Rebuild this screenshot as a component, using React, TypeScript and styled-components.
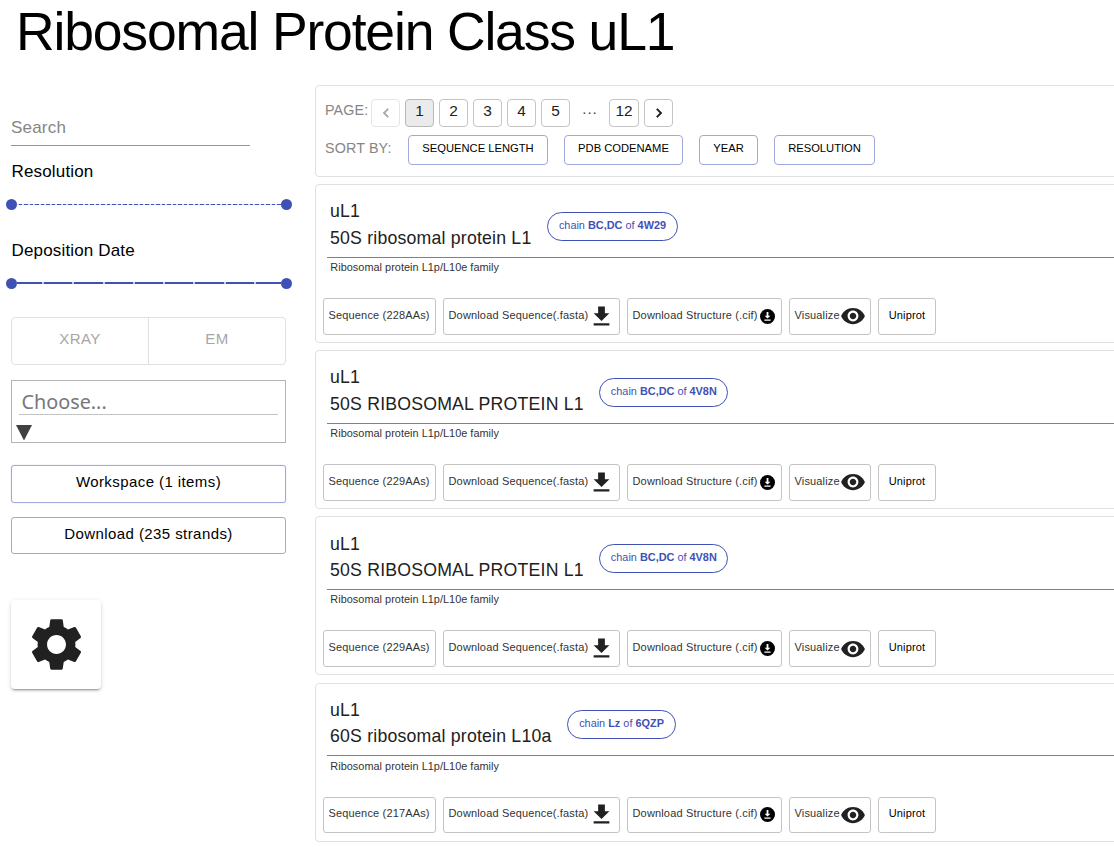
import React from "react";
import styled, { createGlobalStyle, css } from "styled-components";

const GlobalStyle = createGlobalStyle`
  *, *::before, *::after { box-sizing: border-box; }
  html, body { margin: 0; background: #fff; overflow: hidden; }
  body { font-family: "Liberation Sans", Arial, Helvetica, sans-serif; color: #000; height: 847px; }
  button { font: inherit; color: inherit; background: none; margin: 0; padding: 0; }
  svg { display: block; flex: none; }
`;

const Page = styled.div`
  width: 1114px;
  height: 847px;
  overflow: hidden;
`;

const Title = styled.h1`
  margin: 0;
  height: 85px;
  padding: 0 0 0 16px;
  font-size: 53.5px;
  line-height: 63px;
  font-weight: 400;
  letter-spacing: -1.17px;
  white-space: nowrap;
`;

const Columns = styled.div`
  display: flex;
  align-items: flex-start;
`;

const Sidebar = styled.aside`
  flex: none;
  width: 315px;
  padding: 31px 29px 0 11px;
  display: flex;
  flex-direction: column;
`;

const SearchField = styled.div`
  width: 239px;
  height: 30px;
  border-bottom: 1px solid #949494;
  font-size: 17px;
  line-height: 23px;
  letter-spacing: 0.2px;
  color: #868686;
`;

const FilterLabel = styled.div<{ $top: number }>`
  margin-top: ${(p) => p.$top}px;
  padding-left: 0.5px;
  height: 20px;
  font-size: 17px;
  line-height: 20px;
  letter-spacing: 0.16px;
`;

const Slider = styled.div<{ $top: number }>`
  margin-top: ${(p) => p.$top}px;
  height: 12px;
  margin-left: -5px;
  width: 286px;
  display: flex;
  align-items: center;
`;

const Knob = styled.span`
  flex: none;
  width: 11px;
  height: 11px;
  border-radius: 50%;
  background: #3f51b5;
`;

const DashedTrack = styled.span`
  flex: 1;
  height: 1px;
  background: repeating-linear-gradient(90deg, #d5d9f0 0 1.8px, #3f51b5 1.8px 5.5px);
`;

const YearTrack = styled.span`
  flex: 1;
  height: 2px;
  display: flex;
  gap: 2px;
  background: #c5cae9;
`;

const YearSegment = styled.i<{ $edge?: boolean }>`
  flex: ${(p) => (p.$edge ? "0 0 25px" : "1")};
  background: #3f51b5;
`;

const MethodGroup = styled.div`
  margin-top: 28px;
  height: 48px;
  display: flex;
  border: 1px solid #e0e0e0;
  border-radius: 4px;
`;

const MethodButton = styled.button`
  flex: 1;
  border: 0;
  padding-bottom: 5px;
  font-size: 15px;
  letter-spacing: 0.45px;
  color: #a6a6a6;
  & + & { border-left: 1px solid #e0e0e0; }
`;

const Chooser = styled.div`
  margin-top: 15px;
  height: 63px;
  border: 1px solid #b3b3b3;
  padding: 6px 7px 0;
`;

const ChooserInput = styled.div`
  height: 28px;
  padding-left: 2.5px;
  border-bottom: 1px solid #c4c4c4;
  font-family: "Noto Sans", sans-serif;
  font-size: 19.8px;
  line-height: 29px;
  color: #777;
`;

const Caret = styled.svg`
  margin: 10px 0 0 -3px;
`;

const SideButton = styled.button<{ $top: number; $height: number; $raised?: boolean }>`
  margin-top: ${(p) => p.$top}px;
  height: ${(p) => p.$height}px;
  border: 1px solid #9fa8da;
  border-radius: 3px;
  padding-bottom: 4px;
  font-size: 15px;
  letter-spacing: 0.42px;
  ${(p) => p.$raised && css`padding-bottom: 5px; box-shadow: 0 0 1px #9fa8da;`}
`;

const SettingsCard = styled.button`
  margin-top: 46px;
  width: 90px;
  height: 89px;
  border: 0;
  border-radius: 4px;
  display: grid;
  place-items: center;
  box-shadow: 0 3px 1px -2px rgba(0, 0, 0, 0.2), 0 2px 2px 0 rgba(0, 0, 0, 0.14), 0 1px 5px 0 rgba(0, 0, 0, 0.12);
`;

const Results = styled.main`
  flex: none;
  width: 830px;
  display: flex;
  flex-direction: column;
  gap: 7.25px;
`;

const Panel = styled.section`
  flex: none;
  border: 1px solid #e0e0e0;
  border-radius: 4px;
`;

const Controls = styled(Panel)`
  height: 92px;
  margin-bottom: -0.3px;
  padding: 13px 0 0 9px;
`;

const ControlRow = styled.div`
  display: flex;
  align-items: flex-start;
  height: 36px;
`;

const ControlLabel = styled.span<{ $width: number; $spacing: number }>`
  width: ${(p) => p.$width}px;
  flex: none;
  font-size: 14.3px;
  line-height: ${(p) => (p.$width > 50 ? 27 : 23)}px;
  letter-spacing: ${(p) => p.$spacing}px;
  color: #868686;
  white-space: nowrap;
`;

const PageButton = styled.button<{ $selected?: boolean; $disabled?: boolean; $wide?: boolean }>`
  width: ${(p) => (p.$wide ? 30 : 29)}px;
  height: 28px;
  margin-right: 5px;
  border: 1px solid #c4c4c4;
  border-radius: 4px;
  display: flex;
  justify-content: center;
  font-size: 15.4px;
  line-height: 22px;
  color: #212121;
  ${(p) => p.$selected && css`background: #ebebeb; border-color: #b8b8b8;`}
  ${(p) => p.$disabled && css`color: #aaa; border-color: #e6e6e6;`}
  svg { margin-top: 4px; }
`;

const Ellipsis = styled.span`
  width: 34px;
  padding-right: 4px;
  flex: none;
  text-align: center;
  font-size: 15px;
  line-height: 20px;
  letter-spacing: 1px;
  color: #444;
`;

const SortButton = styled.button<{ $width: number }>`
  width: ${(p) => p.$width}px;
  height: 30px;
  margin-right: 16px;
  border: 1px solid #9fa8da;
  border-radius: 4px;
  padding-bottom: 4px;
  font-size: 11.2px;
  letter-spacing: 0;
  white-space: nowrap;
`;

const Card = styled(Panel)`
  height: 159px;
  padding: 12.7px 0 0 7px;
  display: flex;
  flex-direction: column;
`;

const CardHeader = styled.div`
  flex: none;
  height: 60px;
  margin-left: 4px;
  padding-left: 3px;
  border-bottom: 1px solid #808080;
  display: flex;
`;

const Names = styled.div`
  padding-top: 0.4px;
  font-size: 17.7px;
  line-height: 26.6px;
  letter-spacing: 0.2px;
  color: #212121;
  white-space: nowrap;
`;

const Chip = styled.span<{ $width: number }>`
  width: ${(p) => p.$width}px;
  height: 29px;
  margin: 14px 0 0 15.5px;
  border: 1px solid #3f51b5;
  border-radius: 15px;
  font-size: 10.9px;
  line-height: 25px;
  text-align: center;
  color: #3f51b5;
  white-space: nowrap;
`;

const Family = styled.div`
  flex: none;
  padding: 0.3px 0 0 7.3px;
  height: 40.2px;
  font-size: 10.9px;
  line-height: 19.4px;
  letter-spacing: 0.03px;
  color: #333;
`;

const Actions = styled.div`
  display: flex;
  gap: 7px;
`;

const ActionButton = styled.button<{ $width: number; $dark?: boolean; $inset?: number }>`
  width: ${(p) => p.$width}px;
  height: 36.8px;
  padding: 0 ${(p) => p.$inset ?? 4.5}px 0 4.5px;
  border: 1px solid #c4c4c4;
  border-radius: 3px;
  display: flex;
  align-items: center;
  justify-content: ${(p) => (p.$dark ? "center" : "space-between")};
  font-size: 11px;
  letter-spacing: 0.16px;
  color: ${(p) => (p.$dark ? "#000" : "#333")};
  white-space: nowrap;
  span { padding-bottom: 3px; }
`;

const DownloadIcon = () => (
  <svg width="27" height="27" viewBox="0 0 24 24" fill="#212121">
    <path d="M19 9h-4V3H9v6H5l7 7 7-7zM5 18v2h14v-2H5z" />
  </svg>
);

const CircleDownloadIcon = () => (
  <svg width="15" height="15" viewBox="0 0 15 15">
    <circle cx="7.5" cy="7.5" r="7.5" fill="#000" />
    <path d="M6.6 3h1.8v3.7h2L7.5 9.6 4.6 6.7h2zM4.4 10.6h6.2v1.2H4.4z" fill="#fff" />
  </svg>
);

const EyeIcon = () => (
  <svg width="26" height="26" viewBox="0 0 24 24" fill="#212121">
    <path d="M12 4.5C7 4.5 2.73 7.61 1 12c1.73 4.39 6 7.5 11 7.5s9.27-3.11 11-7.5c-1.73-4.39-6-7.5-11-7.5zM12 17c-2.76 0-5-2.24-5-5s2.24-5 5-5 5 2.24 5 5-2.24 5-5 5zm0-8c-1.66 0-3 1.34-3 3s1.34 3 3 3 3-1.34 3-3-1.34-3-3-3z" />
  </svg>
);

const GearIcon = () => (
  <svg width="63" height="63" viewBox="0 0 24 24" fill="#212121">
    <path d="M19.14,12.94c0.04-0.3,0.06-0.61,0.06-0.94c0-0.32-0.02-0.64-0.07-0.94l2.03-1.58c0.18-0.14,0.23-0.41,0.12-0.61l-1.92-3.32c-0.12-0.22-0.37-0.29-0.59-0.22l-2.39,0.96c-0.5-0.38-1.03-0.7-1.62-0.94L14.4,2.81c-0.04-0.24-0.24-0.41-0.48-0.41h-3.84c-0.24,0-0.43,0.17-0.47,0.41L9.25,5.35C8.66,5.59,8.12,5.92,7.63,6.29L5.24,5.33c-0.22-0.08-0.47,0-0.59,0.22L2.74,8.87C2.62,9.08,2.66,9.34,2.86,9.48l2.03,1.58C4.84,11.36,4.8,11.69,4.8,12s0.02,0.64,0.07,0.94l-2.03,1.58c-0.18,0.14-0.23,0.41-0.12,0.61l1.92,3.32c0.12,0.22,0.37,0.29,0.59,0.22l2.39-0.96c0.5,0.38,1.03,0.7,1.62,0.94l0.36,2.54c0.05,0.24,0.24,0.41,0.48,0.41h3.84c0.24,0,0.44-0.17,0.47-0.41l0.36-2.54c0.59-0.24,1.13-0.56,1.62-0.94l2.39,0.96c0.22,0.08,0.47,0,0.59-0.22l1.92-3.32c0.12-0.22,0.07-0.47-0.12-0.61L19.14,12.94z M12,15.6c-1.98,0-3.6-1.62-3.6-3.6s1.62-3.6,3.6-3.6s3.6,1.62,3.6,3.6S13.98,15.6,12,15.6z" />
  </svg>
);

const Chevron = ({ left }: { left?: boolean }) => (
  <svg width="18" height="18" viewBox="0 0 24 24" fill="currentColor">
    <path
      d={
        left
          ? "M15.41 7.41L14 6l-6 6 6 6 1.41-1.41L10.83 12z"
          : "M10 6L8.59 7.41 13.17 12l-4.58 4.59L10 18l6-6z"
      }
      stroke="currentColor"
      strokeWidth="0.8"
    />
  </svg>
);

type Protein = { name: string; chains: string; pdb: string; residues: number; chipWidth: number };

const proteins: Protein[] = [
  { name: "50S ribosomal protein L1", chains: "BC,DC", pdb: "4W29", residues: 228, chipWidth: 131 },
  { name: "50S RIBOSOMAL PROTEIN L1", chains: "BC,DC", pdb: "4V8N", residues: 229, chipWidth: 129 },
  { name: "50S RIBOSOMAL PROTEIN L1", chains: "BC,DC", pdb: "4V8N", residues: 229, chipWidth: 129 },
  { name: "60S ribosomal protein L10a", chains: "Lz", pdb: "6QZP", residues: 217, chipWidth: 109 },
];

const sorts = [
  { label: "SEQUENCE LENGTH", width: 140 },
  { label: "PDB CODENAME", width: 119 },
  { label: "YEAR", width: 59 },
  { label: "RESOLUTION", width: 101 },
];

const ProteinCard = ({ protein }: { protein: Protein }) => (
  <Card>
    <CardHeader>
      <Names>
        <div>uL1</div>
        <div>{protein.name}</div>
      </Names>
      <Chip $width={protein.chipWidth}>
        chain <b>{protein.chains}</b> of <b>{protein.pdb}</b>
      </Chip>
    </CardHeader>
    <Family>Ribosomal protein L1p/L10e family</Family>
    <Actions>
      <ActionButton $width={113}>
        <span>Sequence ({protein.residues}AAs)</span>
      </ActionButton>
      <ActionButton $width={177} $inset={4}>
        <span>Download Sequence(.fasta)</span>
        <DownloadIcon />
      </ActionButton>
      <ActionButton $width={155} $inset={6.5}>
        <span>Download Structure (.cif)</span>
        <CircleDownloadIcon />
      </ActionButton>
      <ActionButton $width={82}>
        <span>Visualize</span>
        <EyeIcon />
      </ActionButton>
      <ActionButton $width={58} $dark>
        <span>Uniprot</span>
      </ActionButton>
    </Actions>
  </Card>
);

export default function App() {
  return (
    <Page>
      <GlobalStyle />
      <Title>Ribosomal Protein Class uL1</Title>
      <Columns>
        <Sidebar>
          <SearchField>Search</SearchField>
          <FilterLabel $top={16}>Resolution</FilterLabel>
          <Slider $top={16}>
            <Knob />
            <DashedTrack />
            <Knob />
          </Slider>
          <FilterLabel $top={31}>Deposition Date</FilterLabel>
          <Slider $top={16}>
            <Knob />
            <YearTrack>
              {Array.from({ length: 9 }, (_, i) => (
                <YearSegment key={i} $edge={i === 0 || i === 8} />
              ))}
            </YearTrack>
            <Knob />
          </Slider>
          <MethodGroup>
            <MethodButton>XRAY</MethodButton>
            <MethodButton>EM</MethodButton>
          </MethodGroup>
          <Chooser>
            <ChooserInput>Choose...</ChooserInput>
            <Caret width="16" height="16" viewBox="0 0 16 16">
              <path d="M0 0h16L8 15.5z" fill="#404040" />
            </Caret>
          </Chooser>
          <SideButton $top={22} $height={38} $raised>
            Workspace (1 items)
          </SideButton>
          <SideButton $top={14} $height={37}>
            Download (235 strands)
          </SideButton>
          <SettingsCard>
            <GearIcon />
          </SettingsCard>
        </Sidebar>
        <Results>
          <Controls>
            <ControlRow>
              <ControlLabel $width={46} $spacing={0.15}>PAGE:</ControlLabel>
              <PageButton $disabled>
                <Chevron left />
              </PageButton>
              <PageButton $selected>1</PageButton>
              <PageButton>2</PageButton>
              <PageButton>3</PageButton>
              <PageButton>4</PageButton>
              <PageButton>5</PageButton>
              <Ellipsis>...</Ellipsis>
              <PageButton $wide>12</PageButton>
              <PageButton>
                <Chevron />
              </PageButton>
            </ControlRow>
            <ControlRow>
              <ControlLabel $width={83} $spacing={0.15}>SORT BY:</ControlLabel>
              {sorts.map((s) => (
                <SortButton key={s.label} $width={s.width}>
                  {s.label}
                </SortButton>
              ))}
            </ControlRow>
          </Controls>
          {proteins.map((p, i) => (
            <ProteinCard key={i} protein={p} />
          ))}
        </Results>
      </Columns>
    </Page>
  );
}
